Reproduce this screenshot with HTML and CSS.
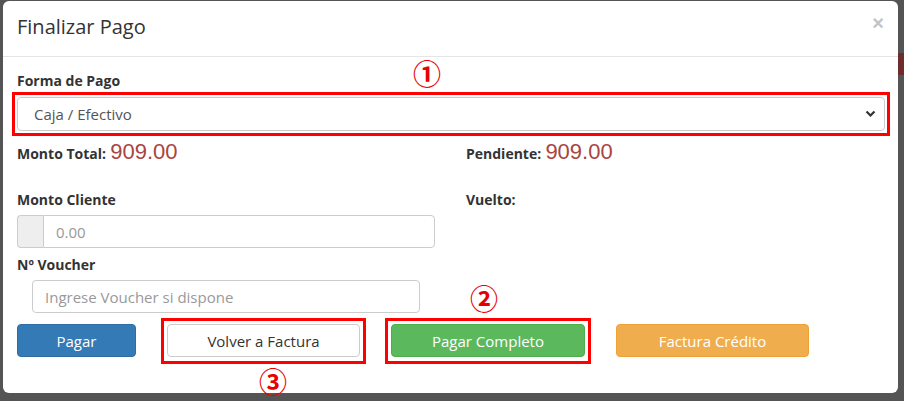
FILE: index.html
```html
<!DOCTYPE html>
<html lang="es">
<head>
<meta charset="utf-8">
<title>Finalizar Pago</title>
<link rel="stylesheet" href="styles.css">
</head>
<body>
<div class="modal">
  <div class="modal-header">
    <h4 class="title">Finalizar Pago</h4>
    <span class="close">×</span>
  </div>
  <div class="modal-body">
    <div class="lbl lbl-first">Forma de Pago</div>
    <div class="select-wrap">
      <div class="select">
        <span class="select-text">Caja / Efectivo</span>
        <svg class="chev" width="11" height="8" viewBox="0 0 11 8"><path d="M1.5 1.5 L5.5 5.5 L9.5 1.5" fill="none" stroke="#333" stroke-width="2.2"/></svg>
      </div>
    </div>
    <div class="grid">
      <div class="stat"><span class="lbl">Monto Total:</span> <span class="amount">909.00</span></div>
      <div class="stat"><span class="lbl">Pendiente:</span> <span class="amount">909.00</span></div>
      <div class="field">
        <div class="lbl">Monto Cliente</div>
        <div class="input-group"><span class="addon"></span><span class="input value">0.00</span></div>
      </div>
      <div class="field">
        <div class="lbl">Vuelto:</div>
      </div>
    </div>
    <div class="lbl lbl-voucher">Nº Voucher</div>
    <div class="input voucher">Ingrese Voucher si dispone</div>
    <div class="actions">
      <button class="btn btn-primary w1">Pagar</button>
      <button class="btn btn-default w2 marked">Volver a Factura</button>
      <button class="btn btn-success w3 marked">Pagar Completo</button>
      <button class="btn btn-warning w2">Factura Crédito</button>
    </div>
  </div>
  <span class="num n1">①</span>
  <span class="num n2">②</span>
  <span class="num n3">③</span>
</div>
</body>
</html>
```

FILE: styles.css
```css
* { box-sizing: border-box; }
html, body { margin: 0; padding: 0; }
body {
  width: 904px;
  height: 401px;
  background: linear-gradient(#6e2c2c, #6e2c2c) no-repeat right 0 top 53px / 6px 22px, #545454;
  font-family: "Open Sans", "Liberation Sans", sans-serif;
  color: #333;
  padding: 1px 6px 8px 3px;
  overflow: hidden;
}
.modal {
  position: relative;
  width: 895px;
  height: 392px;
  background: #fff;
  border-radius: 6px;
}
.modal-header {
  height: 56px;
  border-bottom: 1px solid #e5e5e5;
  display: flex;
  align-items: center;
  justify-content: space-between;
  padding: 0 14px 4px 14px;
}
.title {
  margin: 0;
  font-size: 20px;
  font-weight: 400;
  color: #333;
}
.close {
  font-family: "Liberation Sans", sans-serif;
  font-size: 20px;
  font-weight: 700;
  color: #c4c4c4;
  line-height: 1;
  margin-top: -8px;
}
.modal-body {
  padding: 14px 14px 0 14px;
}
.lbl {
  font-size: 14px;
  font-weight: 700;
  line-height: 20px;
  color: #333;
}
.lbl-first { margin-bottom: 1px; }
.select-wrap {
  border: 3px solid #f00;
  padding: 2px;
  margin: 0 -6px 0 -5px;
}
.select {
  height: 34px;
  border: 1px solid #ccc;
  border-radius: 4px;
  display: flex;
  align-items: center;
  padding: 0 8px 0 16px;
  font-size: 15px;
  color: #555;
}
.select-text { flex: 1; }
.marked::after {
  content: "";
  position: absolute;
  inset: -7px -7px -8px -7px;
  border: 3px solid #f00;
  pointer-events: none;
}
.grid {
  display: grid;
  grid-template-columns: 418px 1fr;
  column-gap: 31px;
  margin-top: 1px;
}
.stat {
  height: 53px;
  line-height: 30px;
}
.amount {
  font-family: "Liberation Sans", sans-serif;
  font-size: 22px;
  color: #a94442;
}
.field .lbl { margin-bottom: 5px; }
.input-group {
  display: flex;
  height: 33px;
}
.addon {
  width: 26px;
  background: #eee;
  border: 1px solid #ccc;
  border-right: 0;
  border-radius: 4px 0 0 4px;
}
.input {
  flex: 1;
  height: 33px;
  border: 1px solid #ccc;
  border-radius: 0 4px 4px 0;
  display: flex;
  align-items: center;
  padding-left: 12px;
  font-size: 15px;
  color: #999;
}
.lbl-voucher { margin-top: 7px; margin-bottom: 5px; }
.voucher {
  margin-left: 15px;
  width: 388px;
  border-radius: 4px;
  flex: none;
}
.actions {
  display: flex;
  gap: 31px;
  margin-top: 11px;
}
.btn {
  position: relative;
  height: 33px;
  border-radius: 4px;
  border: 1px solid transparent;
  font-family: inherit;
  font-size: 15px;
  color: #fff;
  padding: 0;
}
.w1 { width: 119px; }
.w2 { width: 193px; }
.w3 { width: 194px; }
.btn-primary { background: #337ab7; border-color: #2e6da4; }
.btn-default { background: #fff; border-color: #ccc; color: #333; }
.btn-success { background: #5cb85c; border-color: #4cae4c; }
.btn-warning { background: #f0ad4e; border-color: #eea236; }
.num {
  position: absolute;
  font-family: "Noto Sans CJK JP", sans-serif;
  font-size: 28px;
  font-weight: 700;
  color: #e60000;
  line-height: 1;
}
.n1 { left: 410px; top: 58px; }
.n2 { left: 467px; top: 283px; }
.n3 { left: 256px; top: 366px; }
```
